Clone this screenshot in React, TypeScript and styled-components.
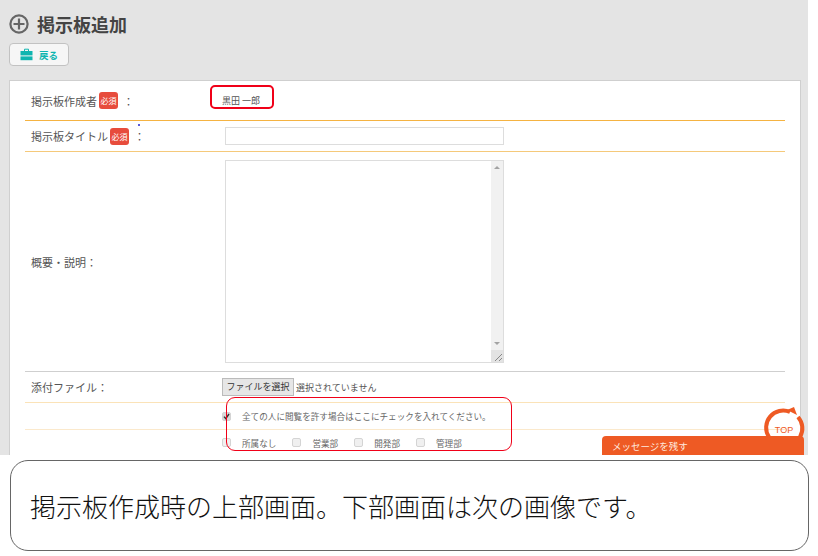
import React from "react";
import styled, { createGlobalStyle } from "styled-components";

const GlobalStyle = createGlobalStyle`
  html, body {
    margin: 0;
    padding: 0;
    background: #fff;
    font-family: "Noto Sans CJK JP", "Noto Sans", sans-serif;
  }
`;

const Page = styled.div`
  width: 818px;
  height: 556px;
  overflow: hidden;
  background: #fff;
`;

const Screen = styled.div`
  position: relative;
  width: 808px;
  height: 455px;
  overflow: hidden;
  background: #e4e4e4;
  padding: 14px 7px 0 9px;
  box-sizing: border-box;
`;

const TitleRow = styled.div`
  display: flex;
  align-items: center;
  gap: 8px;
  height: 20px;
`;

const Title = styled.h1`
  margin: 0;
  font-size: 18px;
  line-height: 20px;
  font-weight: 700;
  color: #444;
`;

const BackButton = styled.button`
  display: flex;
  align-items: center;
  gap: 6px;
  width: 60px;
  height: 23px;
  margin-top: 9px;
  padding: 0 0 0 10px;
  box-sizing: border-box;
  background: #f6f6f6;
  border: 1px solid #c2c2c2;
  border-radius: 4px;
  color: #10b5b0;
  font-family: inherit;
  font-size: 9.5px;
  font-weight: 700;
`;

const Panel = styled.div`
  margin-top: 14px;
  height: 400px;
  padding: 0 15px;
  background: #fff;
  border: 1px solid #cfcfcf;
  box-sizing: border-box;
`;

const Row = styled.div<{ $height: number; $line: string }>`
  display: grid;
  grid-template-columns: 197px 1fr;
  align-items: center;
  height: ${(p) => p.$height}px;
  box-sizing: border-box;
  border-bottom: 1px solid ${(p) => p.$line};
`;

const Label = styled.div`
  display: flex;
  align-items: center;
  padding-left: 6px;
  font-size: 11px;
  color: #555;
`;

const Required = styled.span`
  display: inline-block;
  width: 19px;
  height: 17px;
  margin-left: 2px;
  margin-right: 5px;
  border-radius: 3px;
  background: #e74c3c;
  color: #fff;
  font-size: 8px;
  line-height: 17px;
  text-align: center;
  white-space: nowrap;
`;

const Value = styled.div`
  position: relative;
  display: flex;
  align-items: center;
  font-size: 9px;
  color: #555;
`;

const NameHighlight = styled.div`
  position: absolute;
  left: -12px;
  top: -9px;
  width: 64px;
  height: 24px;
  box-sizing: border-box;
  border: 2.5px solid #f00018;
  border-radius: 5px;
`;

const Dot = styled.span`
  position: absolute;
  left: 138px;
  top: 124px;
  width: 2px;
  height: 2px;
  border-radius: 50%;
  background: #2222cc;
`;

const TextInput = styled.input`
  width: 279px;
  height: 18px;
  margin-left: 3px;
  padding: 0;
  box-sizing: border-box;
  border: 1px solid #ddd;
  background: #fff;
`;

const AreaBox = styled.div`
  display: flex;
  width: 279px;
  height: 203px;
  margin-left: 3px;
  box-sizing: border-box;
  border: 1px solid #ddd;
`;

const Area = styled.textarea`
  flex: 1;
  padding: 0;
  border: 0;
  resize: none;
  outline: none;
`;

const Scrollbar = styled.div`
  display: flex;
  flex-direction: column;
  align-items: center;
  justify-content: space-between;
  width: 12px;
  padding-top: 5px;
  box-sizing: border-box;
  background: #f1f1f1;
`;

const Arrow = styled.span<{ $down?: boolean }>`
  width: 0;
  height: 0;
  border-left: 3px solid transparent;
  border-right: 3px solid transparent;
  ${(p) =>
    p.$down
      ? "border-top: 3px solid #a3a3a3; margin-bottom: 5px;"
      : "border-bottom: 3px solid #a3a3a3;"}
`;

const ScrollBottom = styled.div`
  display: flex;
  flex-direction: column;
  align-items: center;
`;

const Grip = styled.div`
  width: 12px;
  height: 12px;
  background: #e3e3e3;
  display: flex;
`;

const FileButton = styled.button`
  width: 72px;
  height: 18px;
  padding: 0;
  margin-right: 2px;
  background: #e6e6e6;
  border: 1px solid #bbb;
  color: #333;
  font-family: inherit;
  font-size: 9px;
  line-height: 16px;
`;

const ConsentBlock = styled.div`
  position: relative;
`;

const BlockHighlight = styled.div`
  position: absolute;
  left: 201px;
  top: -6px;
  width: 286px;
  height: 54px;
  box-sizing: border-box;
  border: 1.5px solid #f00018;
  border-radius: 9px;
`;

const CheckRow = styled.div<{ $height: number; $line: string }>`
  display: flex;
  align-items: center;
  height: ${(p) => p.$height}px;
  margin-left: 0;
  padding-left: 197px;
  box-sizing: border-box;
  border-bottom: 1px solid ${(p) => p.$line};
  font-size: 8.6px;
  color: #666;
`;

const CheckItem = styled.label`
  display: flex;
  align-items: center;
  margin-right: 16px;
  white-space: nowrap;
`;

const Box = styled.span<{ $checked?: boolean }>`
  display: flex;
  align-items: center;
  justify-content: center;
  width: 7px;
  height: 7px;
  margin-right: 11px;
  border: 1px solid #d4d4d4;
  border-radius: 2px;
  background: ${(p) => (p.$checked ? "#d8d8d8" : "#f0f0f0")};
`;

const TopBadge = styled.svg`
  position: absolute;
  left: 763px;
  top: 407px;
`;

const MessageTab = styled.div`
  position: absolute;
  left: 602px;
  top: 436px;
  width: 202px;
  height: 19px;
  padding-left: 10px;
  box-sizing: border-box;
  background: #ee5a24;
  border-radius: 4px 4px 0 0;
  color: #ffe9df;
  font-size: 9.5px;
  line-height: 21px;
`;

const Caption = styled.div`
  display: flex;
  align-items: center;
  width: 799px;
  height: 91px;
  margin: 5px 0 0 10px;
  padding-left: 19px;
  box-sizing: border-box;
  border: 1.5px solid #666;
  border-radius: 18px;
  background: #fff;
  color: #111;
  font-size: 26px;
  font-weight: 300;
`;

function AddIcon() {
  return (
    <svg width="20" height="20" viewBox="0 0 20 20">
      <circle cx="10" cy="10" r="8.6" fill="none" stroke="#666" strokeWidth="2.2" />
      <path d="M10 4.5v11M4.5 10h11" stroke="#666" strokeWidth="2.2" />
    </svg>
  );
}

function BagIcon() {
  return (
    <svg width="13" height="13" viewBox="0 0 13 13">
      <path d="M4.5 3V1.2h4V3" fill="none" stroke="#10b5b0" strokeWidth="1" />
      <rect x="0.5" y="3" width="12" height="4.4" fill="#10b5b0" />
      <rect x="0.5" y="8.4" width="12" height="3.8" fill="#10b5b0" />
    </svg>
  );
}

function CheckBox({ checked }: { checked?: boolean }) {
  return (
    <Box $checked={checked}>
      {checked && (
        <svg width="7" height="7" viewBox="0 0 7 7">
          <path d="M1 3.6l1.8 2L6 1" fill="none" stroke="#333" strokeWidth="1.4" />
        </svg>
      )}
    </Box>
  );
}

const departments = ["所属なし", "営業部", "開発部", "管理部"];

export default function App() {
  return (
    <Page>
      <GlobalStyle />
      <Screen>
        <TitleRow>
          <AddIcon />
          <Title>掲示板追加</Title>
        </TitleRow>
        <BackButton>
          <BagIcon />
          戻る
        </BackButton>
        <Panel>
          <Row $height={40} $line="#f5b342">
            <Label>
              掲示板作成者<Required>必須</Required>：
            </Label>
            <Value>
              黒田 一郎
              <NameHighlight />
            </Value>
          </Row>
          <Row $height={31} $line="#f5c97a">
            <Label>
              掲示板タイトル<Required>必須</Required>：
            </Label>
            <Value>
              <TextInput />
            </Value>
          </Row>
          <Row $height={220} $line="#cfcfcf">
            <Label>概要・説明：</Label>
            <Value>
              <AreaBox>
                <Area />
                <Scrollbar>
                  <Arrow />
                  <ScrollBottom>
                    <Arrow $down />
                    <Grip>
                      <svg width="12" height="12" viewBox="0 0 12 12">
                        <path d="M4 11l7-7M8 11l3-3" stroke="#888" strokeWidth="1" />
                      </svg>
                    </Grip>
                  </ScrollBottom>
                </Scrollbar>
              </AreaBox>
            </Value>
          </Row>
          <Row $height={31} $line="#fbe3b8">
            <Label>添付ファイル：</Label>
            <Value>
              <FileButton>ファイルを選択</FileButton>
              選択されていません
            </Value>
          </Row>
          <ConsentBlock>
            <CheckRow $height={27} $line="#fbe9cc">
              <CheckItem>
                <CheckBox checked />
                全ての人に閲覧を許す場合はここにチェックを入れてください。
              </CheckItem>
            </CheckRow>
            <CheckRow $height={26} $line="#cfcfcf">
              {departments.map((name) => (
                <CheckItem key={name}>
                  <CheckBox />
                  {name}
                </CheckItem>
              ))}
            </CheckRow>
            <BlockHighlight />
          </ConsentBlock>
        </Panel>
        <Dot />
        <TopBadge width="42" height="32" viewBox="0 0 42 32">
          <path
            d="M6 30A17 17 0 0 1 27 5M35 10A17 17 0 0 1 37 30"
            fill="none"
            stroke="#ee5a24"
            strokeWidth="4"
          />
          <path d="M24 3l7-3 3 8z" fill="#ee5a24" />
          <text
            x="21"
            y="26"
            textAnchor="middle"
            fontSize="9"
            fontFamily="'Liberation Sans', sans-serif"
            fill="#ee5a24"
          >
            TOP
          </text>
        </TopBadge>
        <MessageTab>メッセージを残す</MessageTab>
      </Screen>
      <Caption>掲示板作成時の上部画面。下部画面は次の画像です。</Caption>
    </Page>
  );
}
